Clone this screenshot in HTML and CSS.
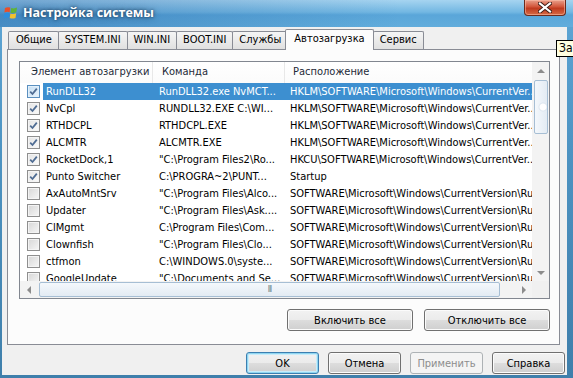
FILE: index.html
```html
<!DOCTYPE html>
<html lang="ru">
<head>
  <meta charset="UTF-8" />
  <title>Настройка системы</title>
  <link rel="stylesheet" href="styles.css">
</head>
<body>
  <div class="window">
    <!-- Заголовок окна -->
    <div class="titlebar">
      <svg class="app-icon" width="16" height="16" viewBox="0 0 16 16" aria-hidden="true">
        <path d="M2 3 Q4.5 1.5 7.3 2.6 L6.6 7.2 Q4 6.2 1.4 7.6 Z" fill="#e8502a"/>
        <path d="M8.2 2.9 Q11 4 14 2.6 L13.3 7.3 Q10.4 8.6 7.5 7.5 Z" fill="#5fb336"/>
        <path d="M1.3 8.5 Q4 7.1 6.5 8.1 L5.8 12.8 Q3.2 11.8 0.6 13.2 Z" fill="#2a8ee0"/>
        <path d="M7.4 8.4 Q10.3 9.5 13.2 8.2 L12.5 12.9 Q9.6 14.2 6.7 13.1 Z" fill="#f2c12e"/>
      </svg>
      <span class="title">Настройка системы</span>
      <div class="close-btn">
        <svg width="14" height="11" viewBox="0 0 14 11" aria-hidden="true">
          <path d="M2 1.5 L12 9.5 M12 1.5 L2 9.5" stroke="#3b1a14" stroke-width="4" stroke-linecap="square"/>
          <path d="M2 1.5 L12 9.5 M12 1.5 L2 9.5" stroke="#fff" stroke-width="2.2" stroke-linecap="square"/>
        </svg>
      </div>
    </div>

    <div class="client">
      <div class="tabs">
        <div class="tab">Общие</div>
        <div class="tab">SYSTEM.INI</div>
        <div class="tab">WIN.INI</div>
        <div class="tab">BOOT.INI</div>
        <div class="tab">Службы</div>
        <div class="tab active">Автозагрузка</div>
        <div class="tab">Сервис</div>
      </div>

      <div class="tab-panel">
        <div class="listview">
          <div class="lv-body">
            <div class="lv-header">
              <div class="hcol hcol-name">Элемент автозагрузки</div>
              <div class="hcol hcol-cmd">Команда</div>
              <div class="hcol hcol-loc">Расположение</div>
            </div>

            <div class="row">
              <span class="check on hot"><svg viewBox="0 0 11 11"><path d="M2.2 5.6 L4.5 8 L8.8 2.6"/></svg></span>
              <div class="row-main selected">
                <span class="c-name">RunDLL32</span>
                <span class="c-cmd">RunDLL32.exe NvMCT...</span>
                <span class="c-loc">HKLM\SOFTWARE\Microsoft\Windows\CurrentVer...</span>
              </div>
            </div>
            <div class="row">
              <span class="check on"><svg viewBox="0 0 11 11"><path d="M2.2 5.6 L4.5 8 L8.8 2.6"/></svg></span>
              <div class="row-main">
                <span class="c-name">NvCpl</span>
                <span class="c-cmd">RUNDLL32.EXE C:\WI...</span>
                <span class="c-loc">HKLM\SOFTWARE\Microsoft\Windows\CurrentVer...</span>
              </div>
            </div>
            <div class="row">
              <span class="check on"><svg viewBox="0 0 11 11"><path d="M2.2 5.6 L4.5 8 L8.8 2.6"/></svg></span>
              <div class="row-main">
                <span class="c-name">RTHDCPL</span>
                <span class="c-cmd">RTHDCPL.EXE</span>
                <span class="c-loc">HKLM\SOFTWARE\Microsoft\Windows\CurrentVer...</span>
              </div>
            </div>
            <div class="row">
              <span class="check on"><svg viewBox="0 0 11 11"><path d="M2.2 5.6 L4.5 8 L8.8 2.6"/></svg></span>
              <div class="row-main">
                <span class="c-name">ALCMTR</span>
                <span class="c-cmd">ALCMTR.EXE</span>
                <span class="c-loc">HKLM\SOFTWARE\Microsoft\Windows\CurrentVer...</span>
              </div>
            </div>
            <div class="row">
              <span class="check on"><svg viewBox="0 0 11 11"><path d="M2.2 5.6 L4.5 8 L8.8 2.6"/></svg></span>
              <div class="row-main">
                <span class="c-name">RocketDock,1</span>
                <span class="c-cmd">"C:\Program Files2\Ro...</span>
                <span class="c-loc">HKCU\SOFTWARE\Microsoft\Windows\CurrentVer...</span>
              </div>
            </div>
            <div class="row">
              <span class="check on"><svg viewBox="0 0 11 11"><path d="M2.2 5.6 L4.5 8 L8.8 2.6"/></svg></span>
              <div class="row-main">
                <span class="c-name">Punto Switcher</span>
                <span class="c-cmd">C:\PROGRA~2\PUNT...</span>
                <span class="c-loc">Startup</span>
              </div>
            </div>
            <div class="row">
              <span class="check"></span>
              <div class="row-main">
                <span class="c-name">AxAutoMntSrv</span>
                <span class="c-cmd">"C:\Program Files\Alco...</span>
                <span class="c-loc">SOFTWARE\Microsoft\Windows\CurrentVersion\Run</span>
              </div>
            </div>
            <div class="row">
              <span class="check"></span>
              <div class="row-main">
                <span class="c-name">Updater</span>
                <span class="c-cmd">"C:\Program Files\Ask....</span>
                <span class="c-loc">SOFTWARE\Microsoft\Windows\CurrentVersion\Run</span>
              </div>
            </div>
            <div class="row">
              <span class="check"></span>
              <div class="row-main">
                <span class="c-name">ClMgmt</span>
                <span class="c-cmd">C:\Program Files\Com...</span>
                <span class="c-loc">SOFTWARE\Microsoft\Windows\CurrentVersion\Run</span>
              </div>
            </div>
            <div class="row">
              <span class="check"></span>
              <div class="row-main">
                <span class="c-name">Clownfish</span>
                <span class="c-cmd">"C:\Program Files\Clo...</span>
                <span class="c-loc">SOFTWARE\Microsoft\Windows\CurrentVersion\Run</span>
              </div>
            </div>
            <div class="row">
              <span class="check"></span>
              <div class="row-main">
                <span class="c-name">ctfmon</span>
                <span class="c-cmd">C:\WINDOWS.0\syste...</span>
                <span class="c-loc">SOFTWARE\Microsoft\Windows\CurrentVersion\Run</span>
              </div>
            </div>
            <div class="row">
              <span class="check"></span>
              <div class="row-main">
                <span class="c-name">GoogleUpdate</span>
                <span class="c-cmd">"C:\Documents and Se...</span>
                <span class="c-loc">SOFTWARE\Microsoft\Windows\CurrentVersion\Run</span>
              </div>
            </div>
          </div>

          <!-- Вертикальная прокрутка -->
          <div class="vscroll">
            <div class="sb-btn"><span class="arrow up"></span></div>
            <div class="sb-track">
              <div class="thumb-v"></div>
            </div>
            <div class="sb-btn"><span class="arrow down"></span></div>
          </div>

          <!-- Горизонтальная прокрутка -->
          <div class="hscroll">
            <div class="sb-btn"><span class="arrow left"></span></div>
            <div class="sb-track-h">
              <div class="thumb-h"><span class="grip">III</span></div>
            </div>
            <div class="sb-btn"><span class="arrow right"></span></div>
          </div>
          <div class="sb-corner"></div>
        </div>

        <div class="panel-buttons">
          <button class="btn btn-wide">Включить все</button>
          <button class="btn btn-wide">Отключить все</button>
        </div>
      </div>

      <div class="dialog-buttons">
        <button class="btn btn-default">OK</button>
        <button class="btn">Отмена</button>
        <button class="btn" disabled>Применить</button>
        <button class="btn">Справка</button>
      </div>
    </div>

    <!-- Всплывающая подсказка у края окна -->
    <div class="tooltip">За</div>
  </div>
</body>
</html>
```

FILE: styles.css
```css
/* Базовые стили */
* {
  margin: 0;
  padding: 0;
  box-sizing: border-box;
}
html, body {
  width: 573px;
  height: 378px;
  overflow: hidden;
}
body {
  font-family: 'DejaVu Sans Condensed', 'Liberation Sans', sans-serif;
  font-size: 11px;
  color: #000;
  background: #4a8ab5;
}
.window {
  position: relative;
  width: 573px;
  height: 378px;
  display: flex;
  flex-direction: column;
  background: linear-gradient(to bottom, #5fa7d6 0%, #4d93c2 40%, #3f7fab 100%);
}

/* Заголовок */
.titlebar {
  height: 27px;
  display: flex;
  align-items: flex-start;
  padding-left: 3px;
  background:
    linear-gradient(to right, rgba(20, 80, 150, 0.35), rgba(20, 80, 150, 0) 70%),
    linear-gradient(to bottom, #a6d4f0 0%, #72b7e2 45%, #5aa6d9 55%, #62addc 100%);
}
.app-icon {
  margin-top: 5px;
  flex-shrink: 0;
}
.title {
  margin-left: 4px;
  margin-top: 4px;
  font-family: 'Open Sans', 'Liberation Sans', sans-serif;
  font-weight: 700;
  font-size: 12.5px;
  line-height: 17px;
  color: #fff;
  text-shadow: 0 0 3px #1c3e5c, 0 0 6px rgba(20, 50, 80, 0.7);
}
.close-btn {
  margin-left: auto;
  margin-right: 7px;
  width: 42px;
  height: 16px;
  display: flex;
  align-items: center;
  justify-content: center;
  border: 1px solid #6b2a1c;
  border-top: none;
  border-radius: 0 0 4px 4px;
  background: linear-gradient(to bottom, #e9a08c 0%, #d2553a 45%, #bf3a1f 55%, #d66a45 100%);
  box-shadow: inset 0 0 0 1px rgba(255, 200, 180, 0.5);
}

/* Клиентская область */
.client {
  flex: 1;
  margin: 0 6px 3px 2px;
  background: #f0f0f0;
  display: flex;
  flex-direction: column;
}
.tabs {
  height: 22px;
  display: flex;
  align-items: flex-end;
  padding-left: 6px;
}
.tab {
  height: 18px;
  padding: 0 6px;
  line-height: 16px;
  border: 1px solid #898c95;
  border-bottom: none;
  border-radius: 2px 2px 0 0;
  background: linear-gradient(to bottom, #f5f5f5, #e0e0e0);
  margin-right: -1px;
  white-space: nowrap;
}
.tab:first-child {
  padding: 0 6px 0 7px;
}
.tab.active {
  height: 21px;
  margin: 0 -1px -1px -2px;
  padding: 0 8px;
  line-height: 18px;
  background: #fcfcfc;
  position: relative;
  z-index: 1;
}
.tab-panel {
  height: 296px;
  margin: 0 7px 0 5px;
  border: 1px solid #898c95;
  background: #fcfcfc;
  padding: 11px 9px 0 11px;
}

/* Список автозагрузки */
.listview {
  height: 238px;
  border: 1px solid #828790;
  background: #fff;
  display: grid;
  grid-template-columns: 1fr 17px;
  grid-template-rows: 1fr 17px;
}
.lv-body {
  overflow: hidden;
}
.lv-header {
  display: flex;
  height: 21px;
  line-height: 20px;
  color: #1e2a38;
  background: linear-gradient(to bottom, #fff, #fbfbfb);
}
.hcol {
  white-space: nowrap;
  overflow: hidden;
  border-right: 1px solid #e8e8e8;
}
.hcol-name { width: 133px; padding-left: 11px; }
.hcol-cmd { width: 132px; padding-left: 9px; }
.hcol-loc { flex: 1; padding-left: 8px; border-right: none; }
.row {
  display: flex;
  height: 17px;
  line-height: 17px;
}
.check {
  width: 13px;
  height: 13px;
  margin: 2px 3px 0 7px;
  flex-shrink: 0;
  border: 1px solid #8f8f8f;
  background: linear-gradient(135deg, #d6d6d6, #f6f6f6);
  box-shadow: inset 0 0 0 1px #f4f4f4;
}
.check.on {
  background: linear-gradient(135deg, #e4e4e4, #fbfbfb);
}
.check.hot {
  border-color: #5a8fbf;
  background: linear-gradient(135deg, #c4def3, #eaf4fc);
  box-shadow: inset 0 0 0 1px #e2f0fb;
}
.check svg {
  display: block;
  width: 11px;
  height: 11px;
}
.check path {
  fill: none;
  stroke: #4f6c93;
  stroke-width: 1.8;
}
.row-main {
  flex: 1;
  display: flex;
  white-space: nowrap;
}
.row-main.selected {
  background: #3d8fd0;
  color: #fff;
}
.c-name, .c-cmd, .c-loc {
  overflow: hidden;
  white-space: nowrap;
}
.c-name { width: 110px; padding-left: 3px; }
.c-cmd { width: 132px; padding-left: 6px; }
.c-loc { flex: 1; padding-left: 5px; }

/* Полосы прокрутки */
.vscroll {
  display: flex;
  flex-direction: column;
  background: #f3f3f3;
}
.hscroll {
  display: flex;
  background: #f3f3f3;
}
.sb-btn {
  width: 17px;
  height: 17px;
  flex-shrink: 0;
  display: flex;
  align-items: center;
  justify-content: center;
}
.sb-track {
  flex: 1;
  padding: 1px 1px 0 2px;
}
.sb-track-h {
  flex: 1;
  padding: 1px 15px 1px 2px;
}
.thumb-v {
  height: 54px;
  border: 1px solid #a6bed4;
  border-radius: 2px;
  background:
    radial-gradient(circle at 8px 26px, #fff 0, #fff 3px, #dde6ef 4px, transparent 5px),
    linear-gradient(to right, #f4f8fc, #e3ebf3);
}
.thumb-h {
  height: 15px;
  border: 1px solid #a6bed4;
  border-radius: 2px;
  background: linear-gradient(to bottom, #f4f8fc, #e3ebf3);
  display: flex;
  align-items: center;
  justify-content: center;
}
.grip {
  font-size: 8px;
  line-height: 8px;
  color: #6f7d8a;
  letter-spacing: -1px;
}
.arrow {
  width: 0;
  height: 0;
  border: 4px solid transparent;
}
.arrow.up { border-bottom-color: #8c8c8c; border-top-width: 0; }
.arrow.down { border-top-color: #8c8c8c; border-bottom-width: 0; }
.arrow.left { border-right-color: #8c8c8c; border-left-width: 0; }
.arrow.right { border-left-color: #8c8c8c; border-right-width: 0; }
.sb-corner {
  background: #f0f0f0;
}

/* Кнопки */
.panel-buttons {
  display: flex;
  justify-content: flex-end;
  gap: 11px;
  margin-top: 10px;
}
.dialog-buttons {
  display: flex;
  justify-content: flex-end;
  gap: 9px;
  margin-top: 7px;
  padding-right: 2px;
}
.btn {
  width: 73px;
  height: 22px;
  font-family: inherit;
  font-size: 11px;
  color: #000;
  border: 1px solid #707070;
  border-radius: 3px;
  background: linear-gradient(to bottom, #f2f2f2 0%, #ebebeb 50%, #dddddd 51%, #cfcfcf 100%);
  box-shadow: inset 0 0 0 1px #fbfbfb;
}
.btn-wide {
  width: 126px;
}
.btn-default {
  border-color: #3c7fb1;
  box-shadow: inset 0 0 0 1px #8fd5f0, inset 0 0 0 2px #c8ecfa;
}
.btn:disabled {
  color: #8d8d8d;
  border-color: #adb2b5;
  background: #f4f4f4;
  box-shadow: none;
}

/* Подсказка */
.tooltip {
  position: absolute;
  top: 40px;
  left: 556px;
  width: 24px;
  height: 17px;
  padding-left: 2px;
  border: 1px solid #000;
  background: #ffffe1;
  font-size: 12px;
  line-height: 15px;
}
```
